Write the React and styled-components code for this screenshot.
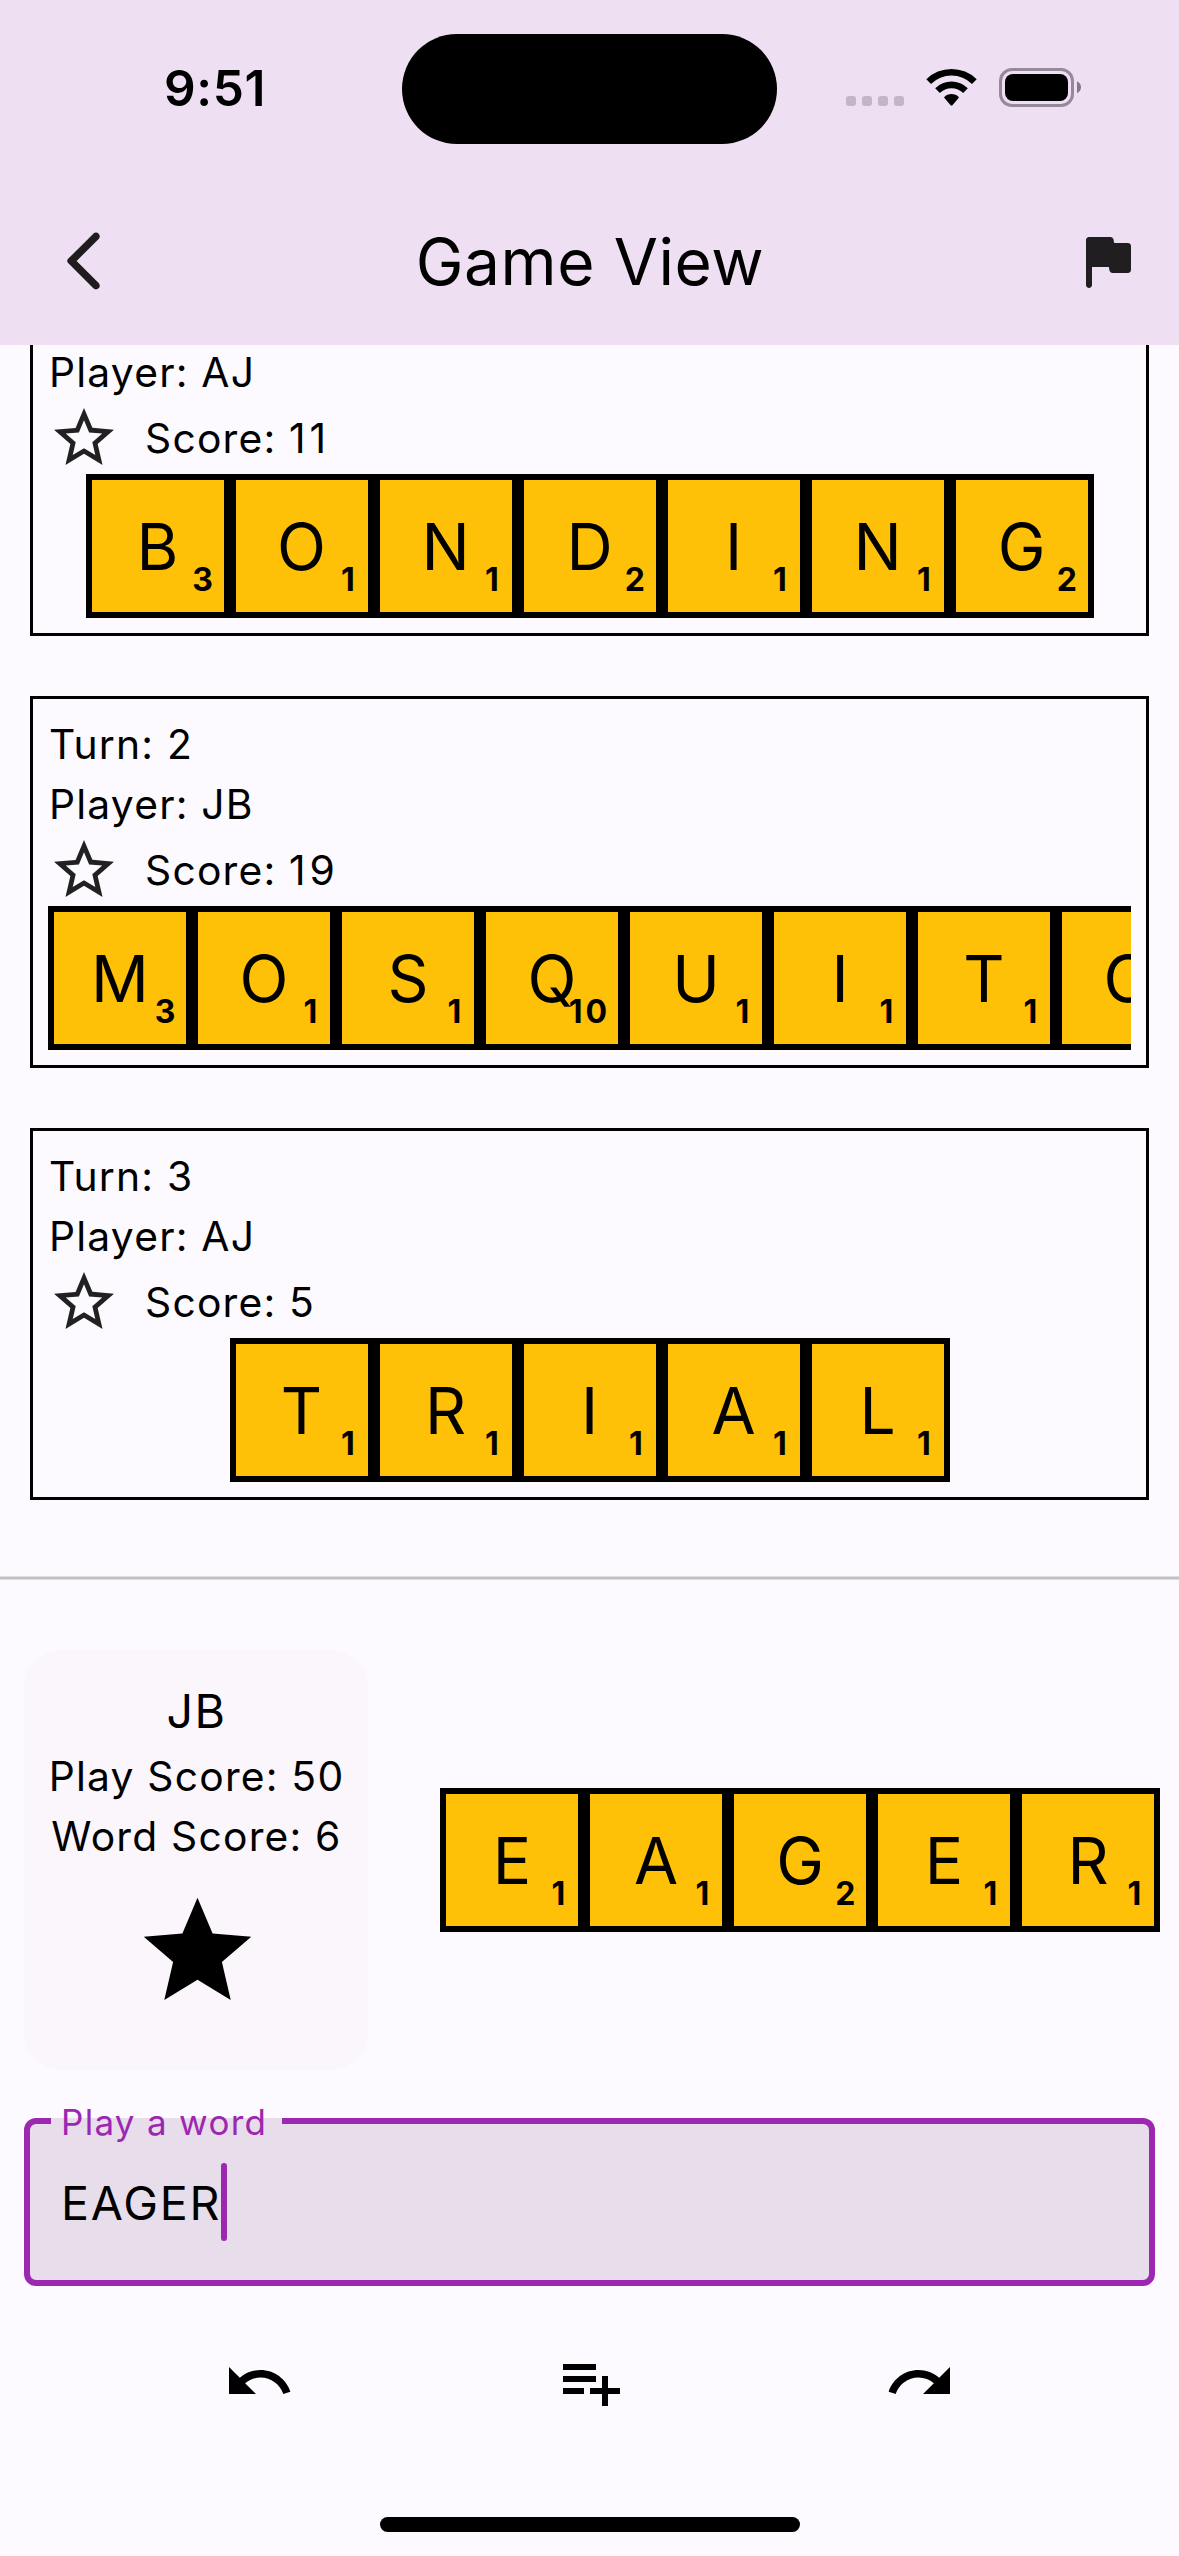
import React from "react";
import styled, { createGlobalStyle } from "styled-components";

const Global = createGlobalStyle`
  * { box-sizing: border-box; }
  body { margin: 0; background: #fcfafe; }
`;

const Screen = styled.div`
  width: 1179px;
  height: 2556px;
  display: flex;
  flex-direction: column;
  background: #fcfafe;
  color: #000;
  font-family: Inter, "Liberation Sans", sans-serif;
  font-weight: 400;
  overflow: hidden;
`;

const Header = styled.header`
  flex: none;
  height: 345px;
  background: #efdff3;
  display: flex;
  flex-direction: column;
`;

const StatusBar = styled.div`
  height: 177px;
  display: grid;
  grid-template-columns: 402px 375px 1fr;
`;

const Clock = styled.div`
  padding: 58px 0 0 164px;
  font-size: 49.5px;
  line-height: 60px;
  font-weight: 600;
  letter-spacing: 0.6px;
`;

const Island = styled.div`
  height: 110px;
  margin-top: 34px;
  border-radius: 55px;
  background: #000;
`;

const StatusIcons = styled.div`
  display: flex;
  align-items: flex-start;
  padding: 68px 0 0 69px;
`;

const Dots = styled.div`
  display: flex;
  gap: 6px;
  margin: 28px 22px 0 0;
`;

const Dot = styled.span`
  width: 10px;
  height: 10px;
  border-radius: 3px;
  background: #c4b6c8;
`;

const StatusSvg = styled.svg`
  display: block;
  margin-right: ${(p) => p.$gap || 0}px;
`;

const Toolbar = styled.div`
  height: 168px;
  display: flex;
  align-items: center;
  justify-content: space-between;
  padding: 0 36px 0 48px;
`;

const Title = styled.h1`
  margin: 0;
  font-size: 64px;
  font-weight: 400;
  line-height: 84px;
  letter-spacing: 0.6px;
  padding: 2px 11px 0 0;
`;

const Icon = styled.svg`
  display: block;
  flex: none;
  width: ${(p) => p.$size || 72}px;
  height: ${(p) => p.$size || 72}px;
  fill: ${(p) => p.$color || "#000"};
`;

const History = styled.section`
  flex: none;
  height: 1231px;
  overflow: hidden;
  display: flex;
  flex-direction: column;
  justify-content: flex-end;
  gap: 60px;
  padding: 0 30px 76px;
`;

const TurnCard = styled.article`
  flex: none;
  height: 372px;
  border: 3px solid #000;
  padding: 15px;
  display: flex;
  flex-direction: column;
`;

const Line = styled.div`
  padding-left: 1px;
  font-size: 40.8px;
  line-height: 60px;
  height: 60px;
  letter-spacing: 1.2px;
  white-space: nowrap;
`;

const ScoreValue = styled.span`
  letter-spacing: 3.8px;
`;

const ScoreRow = styled.div`
  display: flex;
  align-items: center;
  gap: 24px;
  height: 72px;
`;

const Rack = styled.div`
  display: flex;
  justify-content: ${(p) => (p.$start ? "flex-start" : "center")};
  overflow: hidden;
`;

const TileBox = styled.div`
  position: relative;
  flex: none;
  width: 144px;
  height: 144px;
  border: 6px solid #000;
  background: #ffc107;
  display: flex;
  align-items: center;
  justify-content: center;
  padding-top: 2px;
  font-size: 64px;
  line-height: 84px;
`;

const Points = styled.span`
  position: absolute;
  right: ${(p) => (p.$value === 1 ? 12 : p.$value > 9 ? 8 : 10)}px;
  bottom: 12px;
  font-size: 32px;
  line-height: 40px;
  font-weight: 700;
  letter-spacing: ${(p) => (p.$value > 9 ? 3 : 0.6)}px;
`;

const Divider = styled.div`
  flex: none;
  height: 4px;
  background: #c0c0c0;
  border-top: 1px solid #dedde0;
  border-bottom: 1px solid #dedde0;
`;

const PlayArea = styled.section`
  flex: none;
  height: 538px;
  padding: 70px 19px 48px 24px;
  display: flex;
  align-items: center;
  justify-content: space-between;
`;

const PlayerPanel = styled.div`
  width: 344px;
  height: 420px;
  border-radius: 36px;
  background: #faf6fc;
  padding-top: 24px;
  display: flex;
  flex-direction: column;
  align-items: center;
`;

const PlayerName = styled.div`
  padding: 1px 0 0 1px;
  font-size: 46.6px;
  line-height: 72px;
  height: 72px;
  letter-spacing: 1.5px;
`;

const StarSlot = styled.div`
  padding: 21px 0 0 3px;
`;

const Field = styled.div`
  position: relative;
  flex: none;
  height: 168px;
  margin: 0 24px;
  padding: 0 31px;
  border: 6px solid #9c27b0;
  border-radius: 12px;
  background: #e8ddea;
  display: flex;
  align-items: center;
`;

const Label = styled.label`
  position: absolute;
  left: 21px;
  top: -6px;
  width: 231px;
  height: 6px;
  padding-left: 10px;
  background: #e8ddea;
  color: #9c27b0;
  font-size: 35px;
  line-height: 8px;
  letter-spacing: 1.3px;
  white-space: nowrap;
`;

const Value = styled.span`
  font-size: 46.6px;
  line-height: 72px;
  padding-top: 2px;
  letter-spacing: 1.8px;
`;

const Caret = styled.span`
  width: 6px;
  height: 78px;
  border-radius: 3px;
  background: #9c27b0;
`;

const Actions = styled.nav`
  flex: none;
  display: flex;
  justify-content: space-evenly;
  padding-top: 24px;
`;

const ActionButton = styled.button`
  width: 144px;
  height: 144px;
  padding: 0;
  border: 0;
  background: transparent;
  display: flex;
  align-items: center;
  justify-content: center;
`;

const HomeIndicator = styled.div`
  width: 420px;
  height: 15px;
  margin: auto auto 24px 380px;
  border-radius: 8px;
  background: #000;
`;

const paths = {
  back: "M16.88 2.88c-.49-.49-1.28-.49-1.77 0l-8.41 8.41c-.39.39-.39 1.02 0 1.41l8.41 8.41c.49.49 1.28.49 1.77 0s.49-1.28 0-1.77L9.54 12l7.35-7.35c.48-.49.48-1.28-.01-1.77z",
  flag: "M14.4 6l-.24-1.2c-.09-.46-.5-.8-.98-.8H6c-.55 0-1 .45-1 1v15c0 .55.45 1 1 1s1-.45 1-1v-6h5.6l.24 1.2c.09.47.5.8.98.8H19c.55 0 1-.45 1-1V7c0-.55-.45-1-1-1h-4.6z",
  starOutline:
    "M22 9.24l-7.19-.62L12 2 9.19 8.63 2 9.24l5.46 4.73L5.82 21 12 17.27 18.18 21l-1.63-7.03L22 9.24zM12 15.4l-3.76 2.27 1-4.28-3.32-2.88 4.38-.38L12 6.1l1.71 4.04 4.38.38-3.32 2.88 1 4.28L12 15.4z",
  star: "M12 17.27L18.18 21l-1.64-7.03L22 9.24l-7.19-.61L12 2 9.19 8.63 2 9.24l5.46 4.73L5.82 21z",
  undo: "M12.5 8c-2.65 0-5.05.99-6.9 2.6L2 7v9h9l-3.62-3.62c1.39-1.16 3.16-1.88 5.12-1.88 3.54 0 6.55 2.31 7.6 5.5l2.37-.78C21.08 11.03 17.15 8 12.5 8z",
  playlistAdd:
    "M14 10H3v2h11v-2zm0-4H3v2h11V6zm4 8v-4h-2v4h-4v2h4v4h2v-4h4v-2h-4zM3 16h7v-2H3v2z",
  redo: "M18.4 10.6C16.55 8.99 14.15 8 11.5 8c-4.65 0-8.58 3.03-9.96 7.22L3.9 16c1.05-3.19 4.05-5.5 7.6-5.5 1.95 0 3.73.72 5.12 1.88L13 16h9V7l-3.6 3.6z",
};

function Glyph({ name, size, color }) {
  return (
    <Icon viewBox="0 0 24 24" $size={size} $color={color}>
      <path d={paths[name]} />
    </Icon>
  );
}

const points = { B: 3, M: 3, D: 2, G: 2, Q: 10 };

function Tile({ letter }) {
  const value = points[letter] || 1;
  return (
    <TileBox>
      {letter}
      <Points $value={value}>{value}</Points>
    </TileBox>
  );
}

function WordRack({ word, start }) {
  return (
    <Rack $start={start}>
      {word.split("").map((letter, i) => (
        <Tile key={i} letter={letter} />
      ))}
    </Rack>
  );
}

const turns = [
  { turn: 1, player: "AJ", score: 11, word: "BONDING" },
  { turn: 2, player: "JB", score: 19, word: "MOSQUITO" },
  { turn: 3, player: "AJ", score: 5, word: "TRIAL" },
];

export default function App() {
  return (
    <Screen>
      <Global />
      <Header>
        <StatusBar>
          <Clock>9:51</Clock>
          <Island />
          <StatusIcons>
            <Dots>
              <Dot />
              <Dot />
              <Dot />
              <Dot />
            </Dots>
            <StatusSvg width="51" height="38" viewBox="0 0 51 38" $gap={22}>
              <path d="M0.3 11.2 A36 36 0 0 1 50.7 11.2 L46 15.9 A29.5 29.5 0 0 0 5 15.9 Z" />
              <path d="M9.2 20.2 A23.4 23.4 0 0 1 41.8 20.2 L37.2 24.9 A16.8 16.8 0 0 0 13.8 24.9 Z" />
              <path d="M18 29.4 C22 25 29 25 33 29.4 L26.6 37 Q25.5 38.2 24.4 37 Z" />
            </StatusSvg>
            <StatusSvg width="83" height="39" viewBox="0 0 83 39">
              <rect x="1.5" y="1.5" width="72" height="36" rx="11.5" fill="none" stroke="#95899a" strokeWidth="3" />
              <rect x="6" y="6" width="63" height="27" rx="8" />
              <path d="M78 13.3 Q82 15.5 82 19.3 T78 25.3 Z" fill="#85788a" />
            </StatusSvg>
          </StatusIcons>
        </StatusBar>
        <Toolbar>
          <Glyph name="back" color="#1f1c20" />
          <Title>Game View</Title>
          <Glyph name="flag" color="#211e22" />
        </Toolbar>
      </Header>

      <History>
        {turns.map((t) => (
          <TurnCard key={t.turn}>
            <Line>Turn: {t.turn}</Line>
            <Line>Player: {t.player}</Line>
            <ScoreRow>
              <Glyph name="starOutline" color="#212121" />
              <Line>
                Score: <ScoreValue>{t.score}</ScoreValue>
              </Line>
            </ScoreRow>
            <WordRack word={t.word} start={t.word.length > 7} />
          </TurnCard>
        ))}
      </History>

      <Divider />

      <PlayArea>
        <PlayerPanel>
          <PlayerName>JB</PlayerName>
          <Line>Play Score: 50</Line>
          <Line>Word Score: 6</Line>
          <StarSlot>
            <Glyph name="star" size={129} />
          </StarSlot>
        </PlayerPanel>
        <WordRack word="EAGER" />
      </PlayArea>

      <Field>
        <Label>Play a word</Label>
        <Value>EAGER</Value>
        <Caret />
      </Field>

      <Actions>
        <ActionButton aria-label="Undo">
          <Glyph name="undo" />
        </ActionButton>
        <ActionButton aria-label="Add word">
          <Glyph name="playlistAdd" />
        </ActionButton>
        <ActionButton aria-label="Redo">
          <Glyph name="redo" />
        </ActionButton>
      </Actions>
      <HomeIndicator />
    </Screen>
  );
}
